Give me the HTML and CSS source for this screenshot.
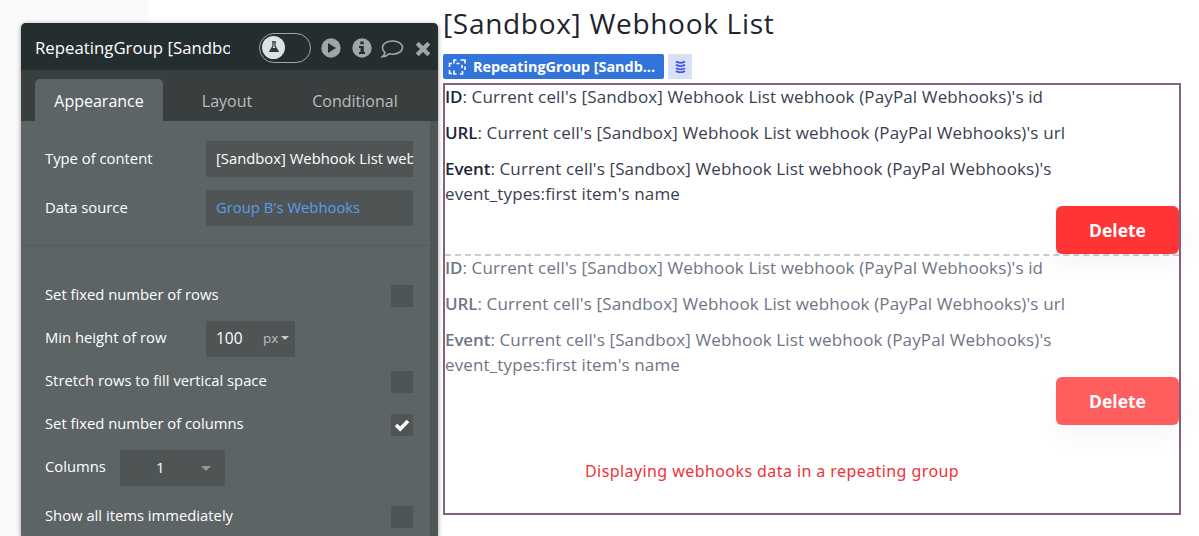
FILE: index.html
```html
<!DOCTYPE html>
<html lang="en">
<head>
  <meta charset="UTF-8">
  <title>Webhook List</title>
  <link rel="stylesheet" href="styles.css">
</head>
<body>
  <div class="editor">
    <!-- Property editor -->
    <div class="panel">
      <div class="panel-header">
        <div class="panel-title">RepeatingGroup [Sandbox]</div>
        <div class="toggle">
          <div class="knob">
            <svg width="12" height="12" viewBox="0 0 12 12"><path d="M4 .8h4M5 1v4L1.800 10.500h8.400L7 5V1" fill="none" stroke="#303737" stroke-width="1.200"/><path d="M4 7h4l2 3.500H2z" fill="#303737"/></svg>
          </div>
        </div>
        <svg class="icon-play" width="20" height="20" viewBox="0 0 20 20"><circle cx="10" cy="10" r="9.700" fill="#a0a6a6"/><path d="M7 5l8 5-8 5z" fill="#252e2e"/></svg>
        <svg class="icon-info" width="20" height="20" viewBox="0 0 20 20"><circle cx="10" cy="10" r="9.700" fill="#a0a6a6"/><path d="M8.300 3.500h3.400v2.800H8.300zM7 8h4.800v6H13v2H7v-2h1.500v-4H7z" fill="#252e2e"/></svg>
        <svg class="icon-comment" width="24" height="20" viewBox="0 0 24 20"><path d="M12.500 3c5.600 0 10 2.900 10 6.600s-4.400 6.600-10 6.600c-1.200 0-2.400-.1-3.500-.4-1.700 1.600-3.800 2.600-6.500 2.800 1.300-1.100 2.200-2.300 2.400-4.200-1.600-1.200-2.400-2.900-2.400-4.800C2.500 5.900 6.900 3 12.500 3z" fill="none" stroke="#a0a6a6" stroke-width="1.600"/></svg>
        <svg class="icon-close" width="16" height="16" viewBox="0 0 16 16"><path d="M2.200 3.200l11.600 11.600M13.800 3.200L2.200 14.800" stroke="#a0a6a6" stroke-width="4.200"/></svg>
      </div>

      <div class="tabs">
        <div class="tab active">Appearance</div>
        <div class="tab">Layout</div>
        <div class="tab">Conditional</div>
      </div>

      <div class="panel-body">
        <div class="fields">
          <div class="section source">
            <div class="row">
              <label>Type of content</label>
              <div class="field">[Sandbox] Webhook List web</div>
            </div>
            <div class="row">
              <label>Data source</label>
              <div class="field link">Group B's Webhooks</div>
            </div>
          </div>

          <div class="section">
            <div class="row">
              <label>Set fixed number of rows</label>
              <div class="checkbox"></div>
            </div>
            <div class="row">
              <label>Min height of row</label>
              <div class="field unit"><span class="number">100</span><span class="px">px</span><span class="caret"></span></div>
            </div>
            <div class="row">
              <label>Stretch rows to fill vertical space</label>
              <div class="checkbox"></div>
            </div>
            <div class="row">
              <label>Set fixed number of columns</label>
              <div class="checkbox">
                <svg width="16" height="14" viewBox="0 0 16 14"><path d="M2 7l4.200 4L14 3" fill="none" stroke="#fff" stroke-width="3.600"/></svg>
              </div>
            </div>
            <div class="row columns">
              <label>Columns</label>
              <div class="field select"><span>1</span><span class="caret"></span></div>
            </div>
            <div class="row last">
              <label>Show all items immediately</label>
              <div class="checkbox"></div>
            </div>
          </div>
        </div>
        <div class="scrollbar"></div>
      </div>
    </div>

    <!-- Page preview -->
    <div class="canvas">
      <h1>[Sandbox] Webhook List</h1>

      <div class="element-bar">
        <div class="element-name">
          <svg width="19" height="18" viewBox="0 0 19 18" fill="none" stroke="#fff" stroke-width="1.600"><path d="M6 5.500V2h2.500M12.500 2H17v3.500M17 8.500V12M6 12.500V16h2.500M12 16h2.500v-3M4 5.500H1.500V9M1.500 12v3.500H4M8.500 5.500h3M14 7v3"/></svg>
          <span>RepeatingGroup [Sandb...</span>
        </div>
        <div class="data-badge">
          <svg width="11" height="13" viewBox="0 0 11 13" fill="none" stroke="#4153e8" stroke-width="1.800"><path d="M1 1.500c2 1.700 7 1.700 9 0M1 4.800c2 1.700 7 1.700 9 0M1 8.100c2 1.700 7 1.700 9 0M1 11c2 1.700 7 1.700 9 0"/></svg>
        </div>
      </div>

      <div class="repeating-group">
        <div class="cell">
          <p><b>ID</b>: Current cell's [Sandbox] Webhook List webhook (PayPal Webhooks)'s id</p>
          <p><b>URL</b>: Current cell's [Sandbox] Webhook List webhook (PayPal Webhooks)'s url</p>
          <p><b>Event</b>: Current cell's [Sandbox] Webhook List webhook (PayPal Webhooks)'s<br>event_types:first item's name</p>
          <button type="button">Delete</button>
        </div>
        <div class="cell faded">
          <p><b>ID</b>: Current cell's [Sandbox] Webhook List webhook (PayPal Webhooks)'s id</p>
          <p><b>URL</b>: Current cell's [Sandbox] Webhook List webhook (PayPal Webhooks)'s url</p>
          <p><b>Event</b>: Current cell's [Sandbox] Webhook List webhook (PayPal Webhooks)'s<br>event_types:first item's name</p>
          <button type="button">Delete</button>
        </div>
        <div class="caption">Displaying webhooks data in a repeating group</div>
      </div>
    </div>
  </div>
</body>
</html>
```

FILE: styles.css
```css
* {
  box-sizing: border-box;
}

body {
  margin: 0;
  height: 536px;
  overflow: hidden;
  background: linear-gradient(to right, #fafafa 148px, #fff 148px);
  font-family: "Open Sans", sans-serif;
}

.editor {
  display: flex;
  height: 536px;
  padding-left: 21px;
}

/* Property editor */
.panel {
  display: flex;
  flex-direction: column;
  flex: none;
  width: 417px;
  height: 513px;
  margin-top: 23px;
  background: #5d6466;
  border-radius: 5px 5px 0 0;
  box-shadow: 0 1px 5px rgba(0, 0, 0, 0.4);
  overflow: hidden;
  color: #fff;
  font-size: 14.8px;
  white-space: nowrap;
}

.panel-header {
  display: flex;
  align-items: center;
  flex: none;
  height: 47px;
  padding: 2px 7px 0 14px;
  background: #252e2e;
}

.panel-header svg {
  flex: none;
}

.panel-title {
  width: 195px;
  overflow: hidden;
  font-size: 16.8px;
}

.toggle {
  width: 52px;
  height: 30px;
  margin-left: 29px;
  padding: 2px;
  border: 1.5px solid #a0a6a6;
  border-radius: 15px;
}

.knob {
  display: flex;
  align-items: center;
  justify-content: center;
  width: 23px;
  height: 23px;
  border-radius: 50%;
  background: #dfe2e2;
}

.icon-play {
  margin-left: 10px;
}

.icon-info {
  margin-left: 11px;
}

.icon-comment {
  margin-left: 8px;
}

.icon-close {
  margin-left: 11px;
}

.tabs {
  display: flex;
  flex: none;
  height: 51px;
  padding: 9px 0 0 14px;
  background: #393e3e;
  font-size: 16px;
  color: #b9bfbf;
}

.tab {
  display: flex;
  align-items: center;
  justify-content: center;
  width: 128px;
  padding-top: 1px;
  border-radius: 5px 5px 0 0;
}

.tab.active {
  background: #5d6466;
  color: #fff;
}

.panel-body {
  display: flex;
  flex: 1;
}

.fields {
  flex: 1;
}

.section {
  padding: 28px 17px 0 24px;
}

.source {
  height: 125px;
  padding-top: 13px;
  border-bottom: 1px solid #565c5d;
}

.row {
  display: flex;
  align-items: center;
  height: 43px;
}

.source .row {
  height: 49px;
}

.row.last {
  margin-top: 6px;
}

.row label {
  flex: 1;
  padding-bottom: 4px;
}

.source label {
  padding-bottom: 1px;
}

.field {
  display: flex;
  align-items: center;
  width: 207px;
  height: 36px;
  padding: 0 0 1px 10px;
  background: #4f5555;
  overflow: hidden;
}

.link {
  color: #5b9cec;
}

.unit {
  width: 89px;
  margin-right: 118px;
}

.number {
  width: 47px;
  font-size: 15.5px;
}

.px {
  color: #b9bfbf;
  font-size: 13.5px;
}

.caret {
  margin-left: 3px;
  border: 4px solid transparent;
  border-top-color: #c4c9c9;
  border-bottom: 0;
}

.columns label {
  flex: none;
  width: 75px;
}

.select {
  width: 105px;
  padding-left: 36px;
  font-size: 15px;
}

.select .caret {
  margin: 3px 0 0 36px;
  border-width: 5px;
  border-bottom: 0;
  border-top-color: #929898;
}

.checkbox {
  display: flex;
  align-items: center;
  justify-content: center;
  width: 22px;
  height: 22px;
  background: #4f5555;
}

.scrollbar {
  width: 8px;
  background: #4f5555;
}

/* Page preview */
.canvas {
  width: 738px;
  margin-left: 5px;
  color: #3a4050;
}

h1 {
  height: 54px;
  margin: 0;
  font-size: 28px;
  font-weight: 400;
  letter-spacing: 0.7px;
  line-height: 47px;
  color: #20242d;
  white-space: nowrap;
}

.element-bar {
  display: flex;
  gap: 4px;
  height: 29px;
}

.element-name {
  display: flex;
  align-items: center;
  gap: 6px;
  width: 221px;
  height: 25px;
  padding-left: 5px;
  border-radius: 2px;
  background: #3374db;
  color: #fff;
  font-size: 14.4px;
  font-weight: 700;
  white-space: nowrap;
}

.data-badge {
  display: flex;
  align-items: center;
  justify-content: center;
  width: 24px;
  height: 25px;
  background: #d8e1f3;
}

.repeating-group {
  height: 432px;
  border: 2px solid #86607f;
}

.cell {
  display: flex;
  flex-direction: column;
  height: 169px;
  font-size: 17px;
  line-height: 24.5px;
  letter-spacing: 0.13px;
  white-space: nowrap;
}

.cell + .cell {
  height: 171px;
  border-top: 2px dashed #ccc;
}

.cell p {
  margin: 0 0 11.7px;
}

.cell b {
  font-weight: 600;
  letter-spacing: -0.1px;
  color: #20263a;
}

.cell button {
  align-self: flex-end;
  flex: none;
  width: 123px;
  height: 48px;
  margin-top: -12px;
  border: 0;
  border-radius: 6px;
  background: #ff3535;
  box-shadow: 0 10px 22px rgba(60, 80, 160, 0.06);
  color: #fff;
  font-family: "Open Sans", sans-serif;
  font-size: 17.5px;
  font-weight: 700;
}

.faded p,
.faded b {
  color: #6f7585;
}

.faded button {
  background: #ff5e5e;
}

.caption {
  margin: 35px 0 0 140px;
  font-family: "Noto Sans", sans-serif;
  font-size: 16px;
  letter-spacing: 0.42px;
  color: #f03238;
}
```
